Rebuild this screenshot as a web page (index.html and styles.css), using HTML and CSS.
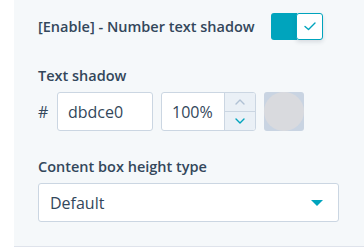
FILE: index.html
```html
<!DOCTYPE html>
<html>
<head>
  <title>Text shadow settings</title>
  <link rel="stylesheet" href="styles.css">
</head>
<body>
  <div class="panel">
    <div class="toggle-row">
      <span class="field-label">[Enable] - Number text shadow</span>
      <div class="toggle">
        <div class="toggle-on"></div>
        <div class="toggle-knob">
          <svg width="12" height="9" viewBox="0 0 12 9"><path d="M1 4.5 L4.5 7.5 L11 1" fill="none" stroke="#00a4bd" stroke-width="1.4" stroke-linecap="round" stroke-linejoin="round"/></svg>
        </div>
      </div>
    </div>

    <div class="field">
      <div class="field-label">Text shadow</div>
      <div class="color-row">
        <span class="hash">#</span>
        <div class="input hex-input">dbdce0</div>
        <div class="input opacity-input">
          <span class="opacity-value">100%</span>
          <div class="stepper">
            <div class="step">
              <svg width="10" height="6" viewBox="0 0 10 6"><path d="M1 5 L5 1 L9 5" fill="none" stroke="#b0c1d4" stroke-width="1.4" stroke-linecap="round" stroke-linejoin="round"/></svg>
            </div>
            <div class="step step-down">
              <svg width="10" height="6" viewBox="0 0 10 6"><path d="M1 1 L5 5 L9 1" fill="none" stroke="#00a4bd" stroke-width="1.4" stroke-linecap="round" stroke-linejoin="round"/></svg>
            </div>
          </div>
        </div>
        <div class="swatch">
          <div class="swatch-color"></div>
        </div>
      </div>
    </div>

    <div class="field">
      <div class="field-label">Content box height type</div>
      <div class="select">
        <span>Default</span>
        <span class="caret"></span>
      </div>
    </div>
  </div>
</body>
</html>
```

FILE: styles.css
```css
body {
  margin: 0;
  background-color: #ffffff;
  font-family: "Open Sans", "Noto Sans", sans-serif;
  color: #33475b;
}

.panel {
  margin-left: 14px;
  height: 247px;
  box-sizing: border-box;
  background-color: #f5f8fa;
  border-bottom: 1px solid #dfe3eb;
  padding: 13px 25px 0 24px;
}

.toggle-row {
  display: flex;
  align-items: center;
  height: 27px;
}

.toggle-row .field-label {
  width: 233px;
}

.field-label {
  font-size: 14.5px;
  font-weight: 600;
  line-height: 18px;
}

.toggle {
  display: flex;
  width: 52px;
  height: 27px;
}

.toggle-on {
  width: 27px;
  background-color: #00a4bd;
  border-radius: 3px 0 0 3px;
}

.toggle-knob {
  width: 25px;
  margin-left: -1px;
  background-color: #ffffff;
  border: 1px solid #00a4bd;
  border-radius: 3px;
  box-shadow: 0 2px 4px rgba(45, 62, 80, 0.15);
  display: flex;
  align-items: center;
  justify-content: center;
}

.field {
  margin-top: 27px;
}

.field + .field {
  margin-top: 27px;
}

.color-row {
  display: flex;
  align-items: center;
  margin-top: 7px;
}

.hash {
  width: 19px;
  font-size: 16px;
}

.input {
  height: 39px;
  box-sizing: border-box;
  background-color: #ffffff;
  border: 1px solid #cbd6e2;
  border-radius: 3px;
  font-size: 16px;
  line-height: 20px;
}

.hex-input {
  width: 96px;
  padding: 9px 10px;
}

.opacity-input {
  width: 95px;
  margin-left: 8px;
  display: flex;
  overflow: hidden;
}

.opacity-value {
  flex: 1;
  padding: 9px 0 0 10px;
}

.stepper {
  width: 30px;
  background-color: #eaf0f6;
  border-left: 1px solid #cbd6e2;
  display: flex;
  flex-direction: column;
}

.step {
  flex: 1;
  display: flex;
  align-items: center;
  justify-content: center;
}

.step-down {
  border-top: 1px solid #cbd6e2;
}

.swatch {
  width: 40px;
  height: 39px;
  margin-left: 8px;
  background-color: #c9d4e2;
  border-radius: 3px;
  position: relative;
}

.swatch-color {
  position: absolute;
  top: 0;
  left: 0;
  width: 40px;
  height: 39px;
  border-radius: 50%;
  background-color: #d9dade;
}

.select {
  margin-top: 7px;
  width: 301px;
  height: 39px;
  box-sizing: border-box;
  background-color: #ffffff;
  border: 1px solid #cbd6e2;
  border-radius: 3px;
  display: flex;
  align-items: center;
  justify-content: space-between;
  padding: 0 15px 0 11px;
  font-size: 16px;
}

.caret {
  width: 0;
  height: 0;
  border-left: 6px solid transparent;
  border-right: 6px solid transparent;
  border-top: 6px solid #00a4bd;
}
```
